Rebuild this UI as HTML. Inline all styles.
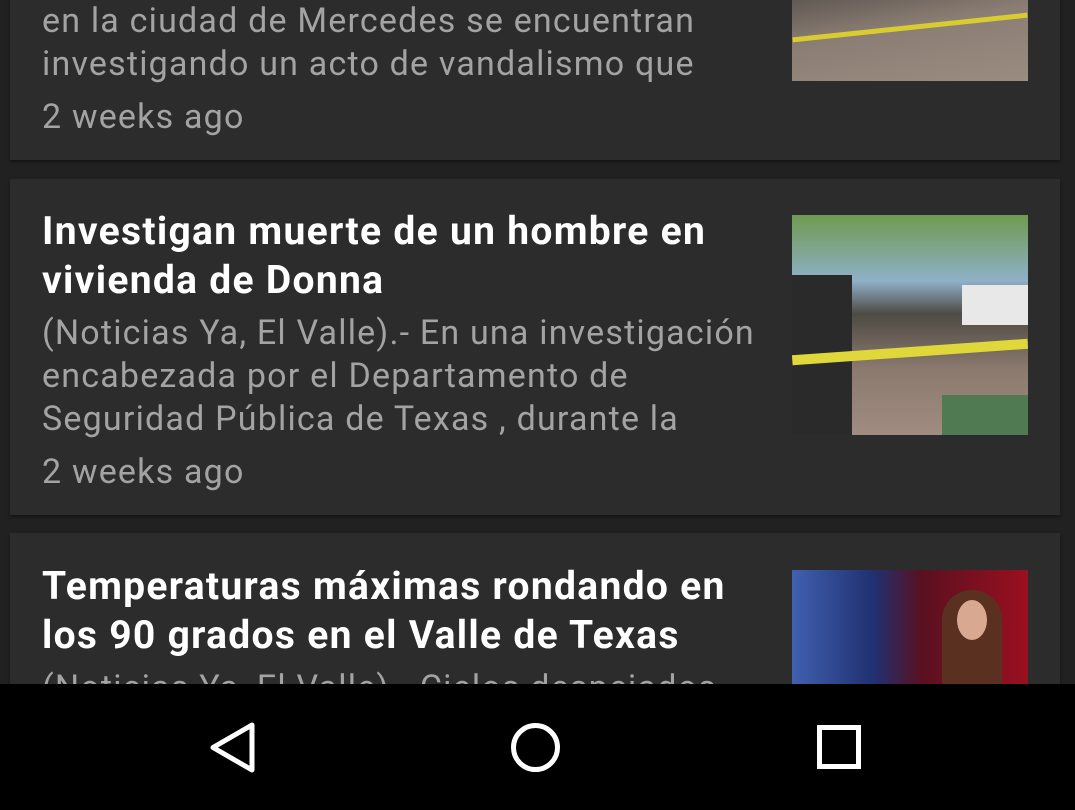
<!DOCTYPE html>
<html><head><meta charset="utf-8"><style>
body{margin:0;width:1075px;height:810px;background:#212121;overflow:hidden;position:relative;font-family:"Roboto","Liberation Sans",sans-serif}
.card{position:absolute;left:10px;width:1050px;background:#2c2c2c;box-shadow:0 2px 3px rgba(0,0,0,.4)}
.t{position:absolute;left:42px;width:740px;color:#fff;font-weight:bold;font-size:39px;letter-spacing:1.3px;line-height:49px;white-space:nowrap}
.b{position:absolute;left:42px;color:#a3a3a3;font-size:34px;letter-spacing:1.2px;line-height:43px;white-space:nowrap}
.img{position:absolute;left:792px;width:236px;overflow:hidden}
.nav{position:absolute;left:0;top:684px;width:1075px;height:126px;background:#000}
</style></head><body>
<div class="card" style="top:-10px;height:170px"></div>
<div class="img" style="top:-5px;height:86px;background:linear-gradient(170deg,#5d5550 0%,#8a7d73 40%,#9b8c80 100%)"><div style="position:absolute;left:0;top:30px;width:236px;height:5px;background:#d8cc30;transform:rotate(-6deg)"></div></div>
<div class="b" style="top:0px">en la ciudad de Mercedes se encuentran</div>
<div class="b" style="top:43px">investigando un acto de vandalismo que</div>
<div class="b" style="top:96px">2 weeks ago</div>

<div class="card" style="top:179px;height:336px"></div>
<div class="t" style="top:207px">Investigan muerte de un hombre en<br>vivienda de Donna</div>
<div class="b" style="top:312px">(Noticias Ya, El Valle).- En una investigación<br>encabezada por el Departamento de<br>Seguridad Pública de Texas , durante la</div>
<div class="b" style="top:451px">2 weeks ago</div>
<div class="img" style="top:215px;height:220px;background:linear-gradient(180deg,#6f9a4f 0%,#8fb0c8 30%,#4d4a44 45%,#8c7a6e 70%,#a08c80 100%)">
<div style="position:absolute;left:0;top:60px;width:60px;height:160px;background:#2a2a2a"></div>
<div style="position:absolute;left:170px;top:70px;width:66px;height:40px;background:#e8e8e8"></div>
<div style="position:absolute;left:0;top:132px;width:236px;height:10px;background:#e0d83a;transform:rotate(-4deg)"></div>
<div style="position:absolute;left:150px;top:180px;width:86px;height:40px;background:#4f7a52"></div></div>

<div class="card" style="top:533px;height:200px"></div>
<div class="t" style="top:562px">Temperaturas máximas rondando en<br>los 90 grados en el Valle de Texas</div>
<div class="b" style="top:667px">(Noticias Ya, El Valle).- Cielos despejados</div>
<div class="img" style="top:570px;height:120px;background:linear-gradient(90deg,#4060b0 0%,#203070 35%,#5a1020 55%,#9a1020 100%)">
<div style="position:absolute;left:150px;top:20px;width:60px;height:100px;border-radius:30px 30px 0 0;background:#5a3020"></div>
<div style="position:absolute;left:165px;top:30px;width:30px;height:40px;border-radius:50%;background:#d8a890"></div></div>

<div class="nav">
<svg width="1075" height="126" style="position:absolute;left:0;top:0">
<path d="M252 41 L252 86 L213 63.5 Z" fill="none" stroke="#fff" stroke-width="5" stroke-linejoin="round"/>
<circle cx="535.5" cy="63.5" r="22" fill="none" stroke="#fff" stroke-width="5"/>
<rect x="819.5" y="43.5" width="39" height="39" fill="none" stroke="#fff" stroke-width="5"/>
</svg></div>
</body></html>
